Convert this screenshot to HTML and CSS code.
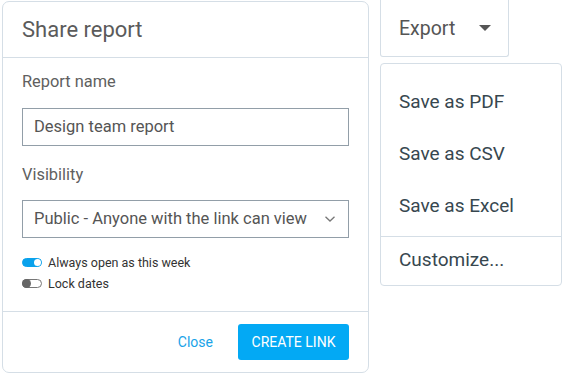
FILE: index.html
```html
<!DOCTYPE html>
<html>
<head>
    <title>Share report</title>
    <link rel="stylesheet" href="styles.css">
</head>
<body>
<div class="page">

    <div class="card">
        <div class="card-head">Share report</div>
        <div class="card-body">
            <div class="lbl">Report name</div>
            <div class="field">Design team report</div>

            <div class="lbl lbl-vis">Visibility</div>
            <div class="field field-select">
                <span>Public - Anyone with the link can view</span>
                <svg class="chev" width="12" height="8" viewBox="0 0 12 8"><path d="M1.5 1.8 6 6 10.5 1.8" fill="none" stroke="#777" stroke-width="1.3"/></svg>
            </div>

            <div class="toggles">
                <div class="tg-row"><span class="tg on"><i></i></span>Always open as this week</div>
                <div class="tg-row"><span class="tg"><i></i></span>Lock dates</div>
            </div>
        </div>
        <div class="card-foot">
            <a href="javascript:;" class="link">Close</a>
            <span class="btn-primary">CREATE LINK</span>
        </div>
    </div>

    <div class="side">
        <div class="export">
            <span>Export</span>
            <svg width="12" height="6" viewBox="0 0 12 6"><path d="M0 0h12L6 6z" fill="#555"/></svg>
        </div>
        <div class="menu">
            <div class="menu-item">Save as PDF</div>
            <div class="menu-item">Save as CSV</div>
            <div class="menu-item">Save as Excel</div>
            <div class="menu-sep"></div>
            <div class="menu-item menu-last">Customize...</div>
        </div>
    </div>

</div>
</body>
</html>
```

FILE: styles.css
```css
html, body { margin: 0; padding: 0; background: #FFF; }
body { font-family: Roboto, "Liberation Sans", sans-serif; color: #5b5b5b; }
.page { display: flex; align-items: flex-start; gap: 11px; padding: 0 0 0 2px; }

.card {
    margin-top: 1px;
    width: 367px;
    height: 372px;
    box-sizing: border-box;
    border: solid 1px #d5dee6;
    border-radius: 7px;
    display: flex;
    flex-direction: column;
}
.card-head {
    height: 55px;
    line-height: 55px;
    padding: 0 19px;
    font-size: 22px;
    border-bottom: solid 1px #d5dee6;
}
.card-body { flex: 1; padding: 14px 19px 0 19px; }
.lbl { font-size: 16.4px; line-height: 20px; color: #606060; }
.lbl-vis { margin-top: 19px; }
.field {
    margin-top: 16px;
    height: 38px;
    box-sizing: border-box;
    border: solid 1px #929ea8;
    padding: 0 12px 0 11px;
    font-size: 16.5px;
    line-height: 36px;
    color: #555;
}
.field-select { margin-top: 15px; display: flex; justify-content: space-between; align-items: center; }

.toggles { margin-top: 14px; font-size: 12.5px; color: #333; }
.tg-row { display: flex; align-items: center; height: 21px; }
.tg {
    width: 20px; height: 9px;
    box-sizing: border-box;
    border-radius: 5px;
    border: solid 1px #777;
    margin-right: 6px;
    position: relative;
    background: #FFF;
}
.tg i {
    position: absolute; left: -1px; top: -1px;
    width: 9px; height: 9px; border-radius: 50%;
    background: #666;
}
.tg.on { background: #0aa2ec; border-color: #0aa2ec; }
.tg.on i { left: auto; right: 0; top: 0; width: 7px; height: 7px; background: #FFF; }

.card-foot {
    height: 60px;
    border-top: solid 1px #d5dee6;
    display: flex;
    align-items: center;
    justify-content: flex-end;
    padding: 0 19px;
    gap: 25px;
}
.link { color: #1aa3e8; font-size: 14px; text-decoration: none; }
.btn-primary {
    width: 111px; height: 36px; line-height: 36px;
    text-align: center;
    background: #03a9f4;
    color: #FFF;
    font-size: 14px;
    border-radius: 3px;
}

.side { width: 182px; }
.export {
    width: 129px; height: 57px;
    box-sizing: border-box;
    border: solid 1px #d5dee6;
    border-top: none;
    border-radius: 0 0 3px 3px;
    display: flex; align-items: center; justify-content: space-between;
    padding: 0 17px 0 18px;
    font-size: 19.5px;
    color: #555;
}
.menu {
    margin-top: 6px;
    box-sizing: border-box;
    border: solid 1px #d5dee6;
    border-radius: 4px;
    padding: 12px 0 3px 0;
    color: #37474f;
}
.menu-item { font-size: 19px; height: 52px; line-height: 52px; padding-left: 18px; }
.menu-sep { border-top: solid 1px #d5dee6; margin-top: 4px; }
.menu-last { height: 45px; line-height: 46px; }
```
